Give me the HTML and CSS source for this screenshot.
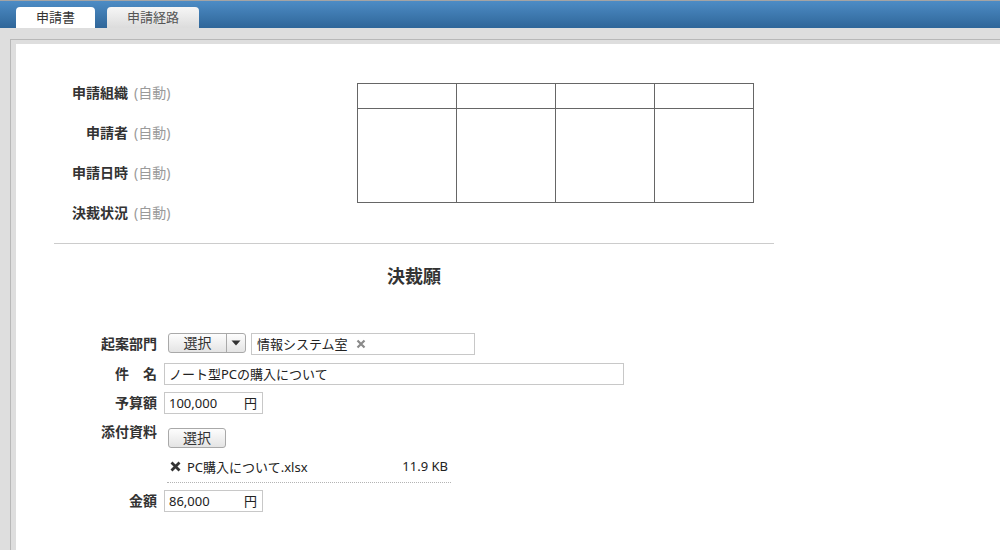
FILE: index.html
```html
<!DOCTYPE html>
<html lang="ja">
<head>
  <meta charset="UTF-8" />
  <title>決裁願</title>
  <link rel="stylesheet" href="styles.css">
</head>
<body>

  <div class="header">
    <div class="tab active">申請書</div>
    <div class="tab">申請経路</div>
  </div>

  <div class="frame">
    <div class="page">
      <div class="content">

        <div class="summary">
          <div class="info">
            <div class="info-row"><span class="info-label">申請組織</span><span class="auto">(自動)</span></div>
            <div class="info-row"><span class="info-label">申請者</span><span class="auto">(自動)</span></div>
            <div class="info-row"><span class="info-label">申請日時</span><span class="auto">(自動)</span></div>
            <div class="info-row"><span class="info-label">決裁状況</span><span class="auto">(自動)</span></div>
          </div>
          <table class="stamps">
            <tr class="stamp-head"><td></td><td></td><td></td><td></td></tr>
            <tr class="stamp-body"><td></td><td></td><td></td><td></td></tr>
          </table>
        </div>

        <hr class="divider">

        <h2 class="title">決裁願</h2>

        <div class="form">
          <div class="row">
            <div class="label">起案部門</div>
            <div class="controls">
              <div class="split-btn">
                <span class="split-main">選択</span>
                <span class="split-arrow">
                  <svg width="10" height="6" viewBox="0 0 10 6"><path d="M0.5 0.5h9L5 5.5z" fill="#333"/></svg>
                </span>
              </div>
              <div class="field chip-field">
                <span>情報システム室</span>
                <svg class="chip-x" width="10" height="10" viewBox="0 0 10 10"><path d="M1.5 1.5l7 7M8.5 1.5l-7 7" stroke="#8a8a8a" stroke-width="2.2"/></svg>
              </div>
            </div>
          </div>

          <div class="row">
            <div class="label">件　名</div>
            <div class="controls">
              <div class="field subject">ノート型PCの購入について</div>
            </div>
          </div>

          <div class="row">
            <div class="label">予算額</div>
            <div class="controls">
              <div class="field money"><span>100,000</span><span>円</span></div>
            </div>
          </div>

          <div class="row">
            <div class="label">添付資料</div>
            <div class="controls stack">
              <span class="btn">選択</span>
              <div class="file">
                <span class="file-name">
                  <svg width="11" height="11" viewBox="0 0 11 11"><path d="M1.5 1.5l8 8M9.5 1.5l-8 8" stroke="#333" stroke-width="2.8"/></svg>
                  PC購入について.xlsx
                </span>
                <span class="file-size">11.9 KB</span>
              </div>
            </div>
          </div>

          <div class="row last">
            <div class="label">金額</div>
            <div class="controls">
              <div class="field money"><span>86,000</span><span>円</span></div>
            </div>
          </div>
        </div>

      </div>
    </div>
  </div>

</body>
</html>
```

FILE: styles.css
```css
body {
  margin: 0;
  font-family: "Noto Sans", "Noto Sans CJK JP", sans-serif;
  background: #dedede;
  color: #333;
  overflow: hidden;
}

/* Kopfleiste mit Reitern */
.header {
  height: 27px;
  border-top: 1px solid #a4a4a4;
  background: linear-gradient(#4d8cc5, #2f6699);
  display: flex;
  align-items: flex-end;
  padding-left: 16px;
  gap: 12px;
}

.tab {
  height: 21px;
  line-height: 21px;
  font-size: 13px;
  text-align: center;
  border-radius: 4px 4px 0 0;
  color: #555;
  background: linear-gradient(#f6f6f6, #dcdcdc);
  width: 92px;
  box-sizing: border-box;
}

.tab.active {
  width: 79px;
  background: #fff;
  color: #333;
}

.frame {
  margin: 11px 0 0 10px;
  border-top: 1px solid #b8b8b8;
  border-left: 1px solid #b8b8b8;
  padding: 4px 0 0 5px;
}

.page {
  background: #fff;
  height: 506px;
  padding-top: 28px;
  box-sizing: border-box;
}

.content {
  margin-left: 38px;
  width: 720px;
}

/* oberer Bereich */
.summary {
  display: flex;
}

.info {
  width: 303px;
}

.info-row {
  height: 40px;
  display: flex;
  align-items: center;
  font-size: 14px;
}

.info-label {
  width: 74px;
  text-align: right;
  font-weight: bold;
}

.auto {
  margin-left: 6px;
  color: #9a9a9a;
}

.stamps {
  margin-top: 11px;
  border-collapse: collapse;
  table-layout: fixed;
  width: 397px;
  align-self: flex-start;
}

.stamps td {
  border: 1px solid #666;
  padding: 0;
  width: 98px;
}

.stamp-head td {
  height: 24px;
}

.stamp-body td {
  height: 93px;
}

.divider {
  border: 0;
  border-top: 1px solid #ccc;
  margin: 11px 0 0;
}

.title {
  margin: 20px 0 0;
  font-size: 18px;
  line-height: 24px;
  text-align: center;
  color: #333;
}

/* Formular */
.form {
  margin-top: 45px;
}

.row {
  display: flex;
  gap: 7px;
  margin-bottom: 7px;
}

.row:first-child {
  margin-bottom: 8px;
}

.label {
  width: 103px;
  text-align: right;
  font-size: 14px;
  font-weight: bold;
  line-height: 22px;
  flex: none;
}

.controls {
  display: flex;
  align-items: flex-start;
}

.controls.stack {
  flex-direction: column;
  padding-top: 7px;
}

.field {
  height: 22px;
  box-sizing: border-box;
  border: 1px solid #c8c8c8;
  padding: 0 4px;
  font-size: 13px;
  line-height: 20px;
  color: #222;
}

.chip-field {
  width: 224px;
  margin-left: 5px;
  padding-left: 5px;
  display: flex;
  align-items: center;
  gap: 8px;
}

.subject {
  width: 460px;
}

.money {
  width: 99px;
  display: flex;
  justify-content: space-between;
  padding-right: 5px;
}

.split-btn {
  margin-left: 4px;
  height: 20px;
  display: flex;
  border: 1px solid #a9a9a9;
  border-radius: 3px;
  background: linear-gradient(#fdfdfd, #e4e4e4);
  box-sizing: border-box;
  font-size: 14px;
  line-height: 18px;
}

.split-main {
  width: 57px;
  text-align: center;
}

.split-arrow {
  width: 18px;
  border-left: 1px solid #a9a9a9;
  display: flex;
  align-items: center;
  justify-content: center;
}

.btn {
  margin-left: 4px;
  width: 58px;
  height: 20px;
  box-sizing: border-box;
  border: 1px solid #a9a9a9;
  border-radius: 3px;
  background: linear-gradient(#fdfdfd, #e4e4e4);
  font-size: 14px;
  line-height: 18px;
  text-align: center;
}

.file {
  margin: 6px 0 0 3px;
  width: 284px;
  height: 29px;
  box-sizing: border-box;
  padding: 0 3px 4px;
  border-bottom: 1px dotted #b4b4b4;
  display: flex;
  justify-content: space-between;
  align-items: center;
  font-size: 13px;
  color: #222;
}

.file-name {
  display: flex;
  align-items: center;
  gap: 6px;
}

.row.last {
  margin-top: 6px;
}
```
